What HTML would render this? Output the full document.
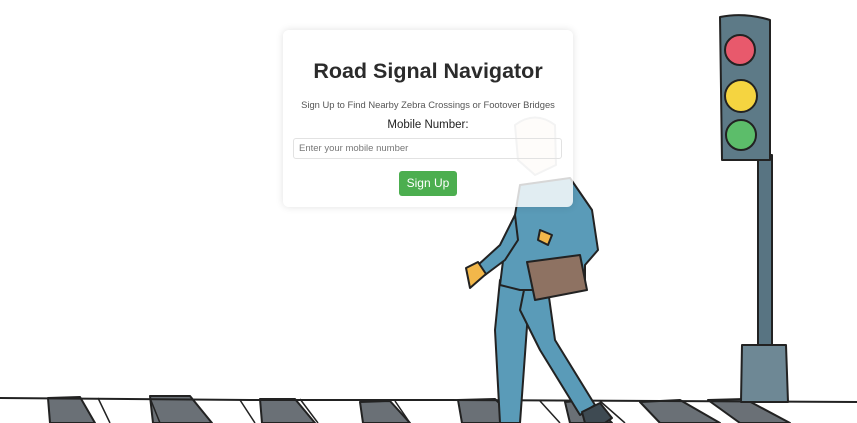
<!DOCTYPE html>
<html><head><meta charset="utf-8"><style>
body{margin:0;width:857px;height:423px;overflow:hidden;background:#fff;font-family:"Liberation Sans",sans-serif;position:relative}
svg{position:absolute;left:0;top:0}
.card{position:absolute;left:283px;top:30px;width:290px;height:177px;background:rgba(255,255,255,0.82);border-radius:6px;box-shadow:0 0 8px rgba(0,0,0,0.12);text-align:center}
h1{margin:0;position:absolute;top:29px;left:0;right:0;font-size:21.5px;font-weight:bold;color:#2b2b2b}
.sub{position:absolute;top:69px;left:0;right:0;font-size:9.4px;color:#555}
.lab{position:absolute;top:89px;left:0;right:0;font-size:11.5px;color:#222}
.inp{position:absolute;left:10px;top:108px;width:269px;height:21px;border:1px solid #e2e2e2;border-radius:3px;text-align:left;font-size:9.5px;color:#777;line-height:20px;padding-left:5px;box-sizing:border-box}
.btn{position:absolute;left:116px;top:141px;width:58px;height:25px;background:#4cae4f;border-radius:3px;color:#fff;font-size:12px;line-height:25px}
</style></head><body>
<svg width="857" height="423" viewBox="0 0 857 423">
<g stroke="#222" stroke-width="2" stroke-linejoin="round">
<g fill="#6a7076">
<path d="M48 398 L80 397 L95 423 L50 423 Z"/>
<path d="M150 396 L190 396 L212 423 L153 423 Z"/>
<path d="M260 399 L295 399 L315 423 L262 423 Z"/>
<path d="M360 402 L390 401 L410 423 L363 423 Z"/>
<path d="M458 400 L495 399 L520 423 L462 423 Z"/>
<path d="M565 402 L590 400 L612 423 L570 423 Z"/>
<path d="M640 402 L680 400 L720 423 L660 423 Z"/>
<path d="M708 400 L745 399 L790 423 L740 423 Z"/>
</g>
<path d="M0 398 L250 400 L450 400 L857 402" fill="none"/>
<path d="M98 398 L110 423 M150 398 L160 423 M240 400 L255 423 M300 399 L318 423 M395 401 L410 423 M540 401 L560 423 M600 401 L625 423" fill="none" stroke-width="1.5"/>
<rect x="758" y="155" width="14" height="190" fill="#587482"/>
<path d="M742 345 L786 345 L788 402 L741 402 Z" fill="#6e8895"/>
<path d="M720 17 Q744 12 770 20 L770 160 L722 160 Z" fill="#5d7a87"/>
<circle cx="740" cy="50" r="15" fill="#e8596c"/>
<circle cx="741" cy="96" r="16" fill="#f5d440"/>
<circle cx="741" cy="135" r="15" fill="#5cbd6a"/>
<!-- person: legs -->
<path d="M500 280 L530 285 L520 423 L500 423 L495 330 Z" fill="#5a9bb8"/>
<path d="M525 285 L548 290 L555 340 L595 405 L580 415 L540 350 L520 310 Z" fill="#5a9bb8"/>
<path d="M582 412 L600 403 L612 418 L605 423 L585 423 Z" fill="#3e4a52"/>
<!-- torso -->
<path d="M520 185 L570 178 L592 210 L598 250 L585 265 L585 280 L555 290 L520 290 L500 285 L505 245 L515 215 Z" fill="#5a9bb8"/>
<!-- left arm -->
<path d="M515 215 L500 245 L478 265 L485 275 L505 260 L518 240 Z" fill="#5a9bb8"/>
<path d="M466 268 L478 262 L486 274 L470 288 Z" fill="#f2b74a"/>
<path d="M540 230 L552 235 L548 245 L538 240 Z" fill="#f2b74a"/>
<path d="M527 262 L580 255 L587 290 L535 300 Z" fill="#8e7262"/>
<path d="M515 125 Q535 110 555 125 L556 165 L535 175 L518 160 Z" fill="#f6ece2" stroke="#bbb"/>
</g>
</svg>
<div class="card">
<h1>Road Signal Navigator</h1>
<div class="sub">Sign Up to Find Nearby Zebra Crossings or Footover Bridges</div>
<div class="lab">Mobile Number:</div>
<div class="inp">Enter your mobile number</div>
<div class="btn">Sign Up</div>
</div>
</body></html>
